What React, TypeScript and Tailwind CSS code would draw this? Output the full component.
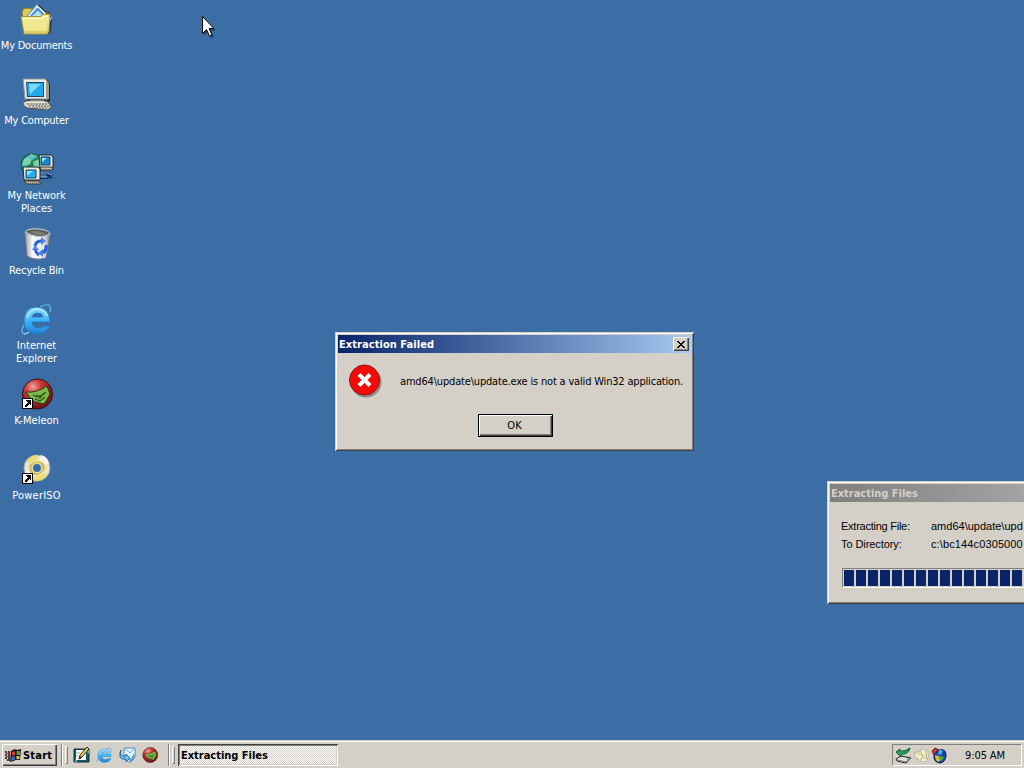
import type { ReactNode } from 'react';

function DocumentsIcon() {
  return (
    <svg width="33" height="33" viewBox="0 0 32 32">
      <path d="M3 6h8l3 2h14l3 6-1 14-2 2H5z" fill="#27364f" />
      <path d="M2 8l2-3h7l2 4h14v18H4z" fill="#d9c85e" stroke="#8d7c2a" />
      <path d="M6 14L16.500 1.500 31 14l-5 8H9z" fill="#f2faff" stroke="#7b9cb8" />
      <path d="M10 12l7-8 9 9-3 4H12z" fill="#3f8fd0" />
      <path d="M12 12l3-2 2-3 3 3 3 3-2 3H12z" fill="#bde2f2" />
      <path d="M18 2l12 12" stroke="#222" />
      <path d="M1 14l1-1h18l2-2h7l-1 17-2 2H4z" fill="#f1e98f" stroke="#a2933c" />
      <path d="M3 15h18l2-2h4" stroke="#fffdd6" fill="none" />
      <path d="M4 27h22l1-10v12H4z" fill="#dfcd68" />
    </svg>
  );
}

function ComputerIcon() {
  return (
    <svg width="32" height="32" viewBox="0 0 32 32">
      <path d="M4 2h22l3 3v18l-3 2H6z" fill="#1d2a38" />
      <path d="M2 1h22l2 2v18H4z" fill="#e9e9e2" stroke="#8d938f" />
      <path d="M25 2l3 3v16l-3 1z" fill="#9c9c91" />
      <path d="M5 4h18v15H6z" fill="#1b466c" />
      <path d="M6 5h16v13H7z" fill="#23a7ed" />
      <path d="M8 6h12L9 16z" fill="#7cdaff" />
      <path d="M9 22h14v2H9z" fill="#bbb9aa" />
      <path d="M2 24l4-1h20l4 5v2l-4 2-20-2-4-3z" fill="#d6d2c5" stroke="#4f4e49" />
      <path d="M6 26h20M8 28h20M12 30h15" stroke="#585650" strokeDasharray="2 1" />
      <path d="M5 24h18" stroke="#fff" />
    </svg>
  );
}

function NetworkIcon() {
  return (
    <svg width="34" height="34" viewBox="0 0 34 34">
      <circle cx="12" cy="12" r="11" fill="#238958" stroke="#125345" />
      <path d="M4 6l7-5 6 2-5 3-2 5-4 2-4-2zM13 9l6-3 2 7-6 3z" fill="#7bd1a5" />
      <path d="M2 12l5 3 1 6M9 3l3 3 5-3M14 13l-3 4" stroke="#4db5df" strokeWidth="2" fill="none" />
      <path d="M19 2h12l2 2v11H20z" fill="#e9e8df" stroke="#1c2530" />
      <path d="M21 4h9v8h-9z" fill="#1689cf" stroke="#143f64" />
      <path d="M22 5h5l-5 4z" fill="#8ee5ff" />
      <path d="M20 14h12l1 3H21z" fill="#c6bda5" stroke="#343b41" />
      <path d="M20 20h7l5 2M20 25h7l5-3M25 20l7 5" stroke="#142e59" strokeWidth="2" fill="none" />
      <path d="M20 20h7l5 2M20 24h7" stroke="#92b8ef" fill="none" />
      <path d="M3 14h15l2 2v11H4z" fill="#eee9df" stroke="#202b35" />
      <path d="M6 17h10v8H6z" fill="#24aef0" stroke="#174769" />
      <path d="M7 18h6l-6 5z" fill="#90e3ff" />
      <path d="M4 28h15l2 3H7z" fill="#d5c9ab" stroke="#393a36" />
      <path d="M6 30h13" stroke="#494636" strokeDasharray="1 1" />
    </svg>
  );
}

function RecycleIcon() {
  return (
    <svg width="32" height="32" viewBox="0 0 32 32">
      <defs>
        <linearGradient id="bin" x1="0" x2="1">
          <stop stopColor="#9c9ea8" />
          <stop offset=".3" stopColor="#f8f9fb" />
          <stop offset=".75" stopColor="#e1e4ee" />
          <stop offset="1" stopColor="#92959e" />
        </linearGradient>
      </defs>
      <path d="M4 4l2 24q8 5 19 2l4-24q-11 6-25-2z" fill="url(#bin)" stroke="#777b87" />
      <path d="M4 4Q7 0 18 1q10 1 11 5-11 6-25-2z" fill="#5b5a5c" stroke="#d6d7da" />
      <path d="M8 4q6-3 18 2-7 3-18-2z" fill="#7e7b76" />
      <path d="M14 18q1-5 6-5M25 17q1 5-3 8M14 21q1 4 4 6" fill="none" stroke="#285edb" strokeWidth="3" />
      <path d="M20 9l5 4-5 4zM22 21v8l-5-4zM11 22l3-5 4 5z" fill="#4f80e8" />
    </svg>
  );
}

function ExplorerIcon({ size = 34 }: { size?: number }) {
  return (
    <svg width={size} height={size} viewBox="0 0 34 34">
      <defs>
        <linearGradient id="ie" x1="0" y1="0" x2="0" y2="1">
          <stop stopColor="#87dbff" />
          <stop offset=".5" stopColor="#3eb5f8" />
          <stop offset="1" stopColor="#2380d6" />
        </linearGradient>
      </defs>
      <path d="M4 31Q-1 29 6 19M20 4Q33-2 30 9" fill="none" stroke="#55aee4" strokeWidth="1.400" />
      <path
        fillRule="evenodd"
        d="M30 19H12q1 6 6 6 4 0 6-2h6q-4 8-13 8Q4 30 4 17 5 4 17 4q13 1 13 15zM12 14h11q-1-4-5-4-5 0-6 4z"
        fill="url(#ie)"
        stroke="#1c77bf"
        strokeWidth=".8"
      />
      <path d="M7 15Q10 6 18 6q7 1 9 7" stroke="#b6edff" fill="none" strokeWidth="1.5" />
      <path d="M4 31q2 0 5-2" fill="none" stroke="#91e0ff" strokeWidth="1.300" />
    </svg>
  );
}

function MeleonBall({ size = 32 }: { size?: number }) {
  return (
    <svg width={size} height={size} viewBox="0 0 32 32">
      <defs>
        <radialGradient id="melon" cx=".35" cy=".25" r=".8">
          <stop stopColor="#f0a09a" />
          <stop offset=".35" stopColor="#cc3434" />
          <stop offset="1" stopColor="#6c1015" />
        </radialGradient>
      </defs>
      <circle cx="16.500" cy="16" r="15" fill="url(#melon)" stroke="#30100f" />
      <path d="M5 14q11 1 21-6l3 8q-3 6-6 10l-9-2Q8 20 5 14z" fill="#80b848" stroke="#243c19" />
      <path d="M12 17q6 4 13-3M14 21l5 2 5-4M16 17l3 3 3-4" stroke="#28631d" fill="none" strokeWidth="1.400" />
    </svg>
  );
}

function DiscIcon() {
  return (
    <svg width="32" height="32" viewBox="0 0 32 32">
      <circle cx="16" cy="15" r="13" fill="#e4e4d8" stroke="#a5a99c" />
      <path d="M16 15L5 8q5-6 11-6zM16 15l10 8q-6 6-13 5z" fill="#eadb72" />
      <path d="M16 15L20 2q6 1 8 8zM16 15l-12 4q2 6 7 8z" fill="#f5f4ee" />
      <circle cx="16" cy="15" r="8" fill="#d9bf38" />
      <path d="M9 11q5-6 12-2M11 21q6 5 12-3" fill="none" stroke="#f3e8a8" strokeWidth="1.500" />
      <circle cx="16" cy="15" r="4.700" fill="#3c6ea5" stroke="#d8d8d0" strokeWidth="1.500" />
    </svg>
  );
}

function Shortcut({ children }: { children: ReactNode }) {
  return (
    <div className="relative h-8 w-8">
      {children}
      <svg className="absolute top-[20px] left-[1px]" width="11" height="11" viewBox="0 0 11 11" shapeRendering="crispEdges">
        <path d="M.5.5h10v10H.5z" fill="#fff" stroke="#000" />
        <path d="M4 2h5v5H8V6H7v1H6v1H5v1H3V7h1V6h1V5h1V4H5V3H4z" fill="#000" />
      </svg>
    </div>
  );
}

const desktopIcons = [
  { icon: <DocumentsIcon />, label: <>My Documents</>, spacing: 'tracking-[-0.22px]' },
  { icon: <ComputerIcon />, label: <>My Computer</>, spacing: 'tracking-[-0.2px]' },
  { icon: <NetworkIcon />, label: <>My Network<br />Places</>, spacing: 'tracking-[-0.07px]' },
  { icon: <RecycleIcon />, label: <>Recycle Bin</>, spacing: 'tracking-[-0.2px]' },
  { icon: <ExplorerIcon />, label: <>Internet<br />Explorer</>, spacing: 'tracking-[0px]' },
  { icon: <Shortcut><MeleonBall /></Shortcut>, label: <>K-Meleon</>, spacing: 'tracking-[0px]' },
  { icon: <Shortcut><DiscIcon /></Shortcut>, label: <>PowerISO</>, spacing: 'tracking-[0.2px]' },
];

const windowFrame =
  'bg-[#d4d0c8] shadow-[inset_1px_1px_#d4d0c8,inset_-1px_-1px_#404040,inset_2px_2px_#fff,inset_-2px_-2px_#808080]';

function ErrorDialog() {
  return (
    <div className={'absolute top-[332px] left-[335px] flex h-[119px] w-[359px] flex-col p-[3px] ' + windowFrame}>
      <div className="flex h-[18px] shrink-0 items-center justify-between bg-linear-to-r from-[#0a246a] to-[#a6caf0] pr-[2px] pl-[1px]">
        <span className="pt-[2px] text-[11px] font-bold tracking-[0.06px] text-white">Extraction Failed</span>
        <div className="flex h-[14px] w-4 items-center justify-center bg-[#d4d0c8] shadow-[inset_1px_1px_#fff,inset_-1px_-1px_#404040,inset_-2px_-2px_#808080]">
          <svg width="8" height="7" viewBox="0 0 8 7" shapeRendering="crispEdges">
            <path d="M0 0h2v1h1v1h2V1h1V0h2v1H7v1H6v1H5v1h1v1h1v1h1v1H6V6H5V5H3v1H2v1H0V6h1V5h1V4h1V3H2V2H1V1H0z" fill="#000" />
          </svg>
        </div>
      </div>
      <div className="flex h-[61px] items-start pt-[11px] pl-[10px]">
        <svg width="34" height="34" viewBox="0 0 34 34">
          <circle cx="18" cy="18" r="15.5" fill="#8e8984" />
          <circle cx="16.5" cy="16" r="15" fill="#f50a0a" stroke="#8e1515" />
          <path d="M11 10.5l11 11M22 10.5l-11 11" stroke="#fff" strokeWidth="4" />
        </svg>
        <span className="mt-[11px] ml-[18px] text-[11px] leading-[14px] tracking-[-0.18px] whitespace-nowrap text-black">
          amd64\update\update.exe is not a valid Win32 application.
        </span>
      </div>
      <div className="flex pl-[140px]">
        <button className="h-[23px] w-[75px] border border-black bg-[#d4d0c8] pr-[2px] text-[11px] leading-[20px] shadow-[inset_1px_1px_#fff,inset_-1px_-1px_#404040,inset_-2px_-2px_#808080]">
          OK
        </button>
      </div>
    </div>
  );
}

function ExtractWindow() {
  return (
    <div className={'absolute top-[481px] left-[827px] h-[123px] w-[360px] p-[3px] ' + windowFrame}>
      <div className="flex h-[18px] items-center bg-linear-to-r from-[#808080] to-[#c0c0c0] pt-[2px] pl-[1px] text-[11px] font-bold tracking-[-0.02px] text-[#d4d0c8]">
        Extracting Files
      </div>
      <div className="grid grid-cols-[90px_1fr] pt-[15px] pl-[11px] font-['Liberation_Sans',sans-serif] text-[11px] leading-[18px] whitespace-nowrap text-black">
        <span className="tracking-[-0.25px]">Extracting File:</span>
        <span className="tracking-[0px]">amd64\update\upd</span>
        <span className="tracking-[-0.08px]">To Directory:</span>
        <span className="tracking-[0.12px]">c:\bc144c0305000</span>
      </div>
      <div className="mt-[15px] ml-[12px] flex h-5 w-[310px] gap-[2px] overflow-hidden border border-t-[#808080] border-r-white border-b-white border-l-[#808080] p-px">
        {Array.from({ length: 16 }, (_, i) => (
          <div key={i} className="w-[10px] shrink-0 bg-[#0a246a]" />
        ))}
      </div>
    </div>
  );
}

function Grip() {
  return (
    <div className="flex items-center gap-[2px]">
      <div className="h-[22px] w-[2px] border-l border-l-[#808080] bg-white" />
      <div className="h-[18px] w-[3px] border-t border-r border-b border-l border-t-white border-r-[#808080] border-b-[#808080] border-l-white bg-[#d4d0c8]" />
    </div>
  );
}

function FlagIcon() {
  return (
    <svg width="17" height="15" viewBox="0 0 17 15">
      <path d="M6 3q4-3 6-1l4-1-1 11q-4-1-6 1l-4 1z" fill="#111" />
      <path d="M7 4l3-1v4L7 8z" fill="#e33b2c" />
      <path d="M11.500 3l3.500 0v4h-3.500z" fill="#4aa448" />
      <path d="M6.500 9l3.500-1v4l-4 1z" fill="#3a69d2" />
      <path d="M11.500 8h3v3h-3z" fill="#f0cc32" />
      <path d="M0 4h2M3 4h2M0 7h2M3 7h2M0 10h2M3 10h2M2 12h3" stroke="#111" strokeWidth="1.500" />
      <path d="M1 5.500h4M1 8.500h4" stroke="#b33434" />
    </svg>
  );
}

function ShowDesktopIcon() {
  return (
    <svg width="17" height="17" viewBox="0 0 17 17">
      <path d="M1 2h15v13H1z" fill="#185b67" stroke="#102c35" />
      <path d="M2 12l3 3H2zM12 3h4v4z" fill="#62bdc1" />
      <path d="M3 3h10v10H3z" fill="#fff" />
      <path d="M3 6h4M3 9h2" stroke="#75b4c0" />
      <path d="M6 12l1-4 7-8 2 2-7 8z" fill="#f1c758" stroke="#3b2a15" />
      <path d="M6 12l1-3 2 2z" fill="#222" />
    </svg>
  );
}

function OutlookIcon() {
  return (
    <svg width="17" height="17" viewBox="0 0 17 17">
      <path d="M5 1h11v9l-3 2H5z" fill="#e8f7ff" stroke="#458ebd" />
      <path d="M6 2l5 4 4-4" fill="none" stroke="#69aad6" />
      <path d="M2 3Q0 6 2 8q2 2 5 1V7l4 4-4 4v-3Q0 13 1 7z" fill="#79c2f1" stroke="#2367a3" />
      <path d="M15 6q2 7-3 9l-3 1 3-4z" fill="#4d9cd9" />
    </svg>
  );
}

function Tray() {
  return (
    <div className="flex h-[22px] w-[130px] items-center border border-t-[#808080] border-r-white border-b-white border-l-[#808080] pl-[2px]">
      <svg width="17" height="17" viewBox="0 0 17 17">
        <path d="M1 12l5-3 10 2-5 5-9-2z" fill="#deddd5" stroke="#222" />
        <path d="M2 13l9 2 4-3" stroke="#777" fill="none" />
        <path d="M1 5l4-3v2q5 1 10-3-2 7-9 6v3z" fill="#25a75b" stroke="#12592f" />
        <path d="M12 12h2" stroke="#168a3c" />
      </svg>
      <svg className="ml-[2px]" width="17" height="17" viewBox="0 0 17 17">
        <path d="M1 5h5V2l7 1 2 4-2 7-7 1-2-4H1z" fill="#f5f1d4" stroke="#aaa68f" strokeDasharray="2 1" />
        <path d="M6 4l3 5-3 5M11 4l2 3-1 5" fill="none" stroke="#aaa68f" />
        <path d="M2 6h4M3 8h5M9 8h4M9 11h3" stroke="#ddce72" />
      </svg>
      <svg width="17" height="17" viewBox="0 0 17 17">
        <path d="M1 4l3-3 4 2-1 4-4 1z" fill="#d63829" stroke="#6a1814" />
        <path d="M7 3q8-2 8 5 0 7-6 8-7-1-6-8z" fill="#1743a8" stroke="#101d51" />
        <path d="M8 2l4 2-2 4-3-1z" fill="#4da7e4" />
        <path d="M4 8l4 1 2 4-3 2q-3-2-3-7z" fill="#d8bc37" />
        <path d="M9 9l4 1-2 4-3-2z" fill="#50a63c" />
      </svg>
      <span className="ml-[17px] pt-[3px] text-[11px] tracking-[-0.1px] whitespace-nowrap text-black">9:05 AM</span>
    </div>
  );
}

function Taskbar() {
  return (
    <div className="flex h-7 shrink-0 items-center border-t border-t-[#d4d0c8] bg-[#d4d0c8] pt-[3px] pr-[2px] pb-[2px] pl-[2px] shadow-[inset_0_1px_#fff]">
      <div className="flex h-[22px] w-[55px] items-center gap-px bg-[#d4d0c8] pl-[3px] shadow-[inset_1px_1px_#fff,inset_-1px_-1px_#404040,inset_-2px_-2px_#808080]">
        <FlagIcon />
        <span className="pt-[2px] text-[11px] font-bold tracking-[0.2px] text-black">Start</span>
      </div>
      <div className="ml-[4px] w-[10px]"><Grip /></div>
      <div className="flex w-[97px] items-center gap-[6px] pl-[2px]">
        <ShowDesktopIcon />
        <ExplorerIcon size={17} />
        <OutlookIcon />
        <MeleonBall size={16} />
      </div>
      <Grip />
      <div className="ml-[3px] flex h-[22px] w-[160px] items-center bg-[repeating-conic-gradient(#ffffff_0_25%,#d4d0c8_0_50%)] bg-[length:2px_2px] pt-[2px] pl-[3px] text-[11px] font-bold tracking-[-0.02px] text-black shadow-[inset_1px_1px_#404040,inset_-1px_-1px_#fff,inset_2px_2px_#808080,inset_-2px_-2px_#d4d0c8]">
        Extracting Files
      </div>
      <div className="grow" />
      <Tray />
    </div>
  );
}

export default function App() {
  return (
    <div className="flex h-[768px] w-[1024px] flex-col overflow-hidden bg-[#3c6ea5] font-['DejaVu_Sans_Condensed','DejaVu_Sans',sans-serif] [font-stretch:condensed]">
      <div className="relative grow overflow-hidden">
        <div className="flex w-[74px] flex-col pt-[3px]">
          {desktopIcons.map((item, i) => (
            <div key={i} className="flex h-[75px] w-[73px] flex-col items-center">
              <div className="flex h-[36px] shrink-0 justify-center">{item.icon}</div>
              <div className={'text-center text-[11px] leading-[13px] whitespace-nowrap text-white ' + item.spacing}>{item.label}</div>
            </div>
          ))}
        </div>
        <ExtractWindow />
        <ErrorDialog />
        <svg className="absolute top-[16px] left-[202px]" width="14" height="23" viewBox="0 0 14 23">
          <path d="M2 3v17l4-4 3 6 3-1-3-6h5z" fill="#24456b" />
          <path d="M.500.500v17l4-4 3 6.500 2.500-1-3-6.500h5z" fill="#fff" stroke="#000" />
        </svg>
      </div>
      <Taskbar />
    </div>
  );
}
